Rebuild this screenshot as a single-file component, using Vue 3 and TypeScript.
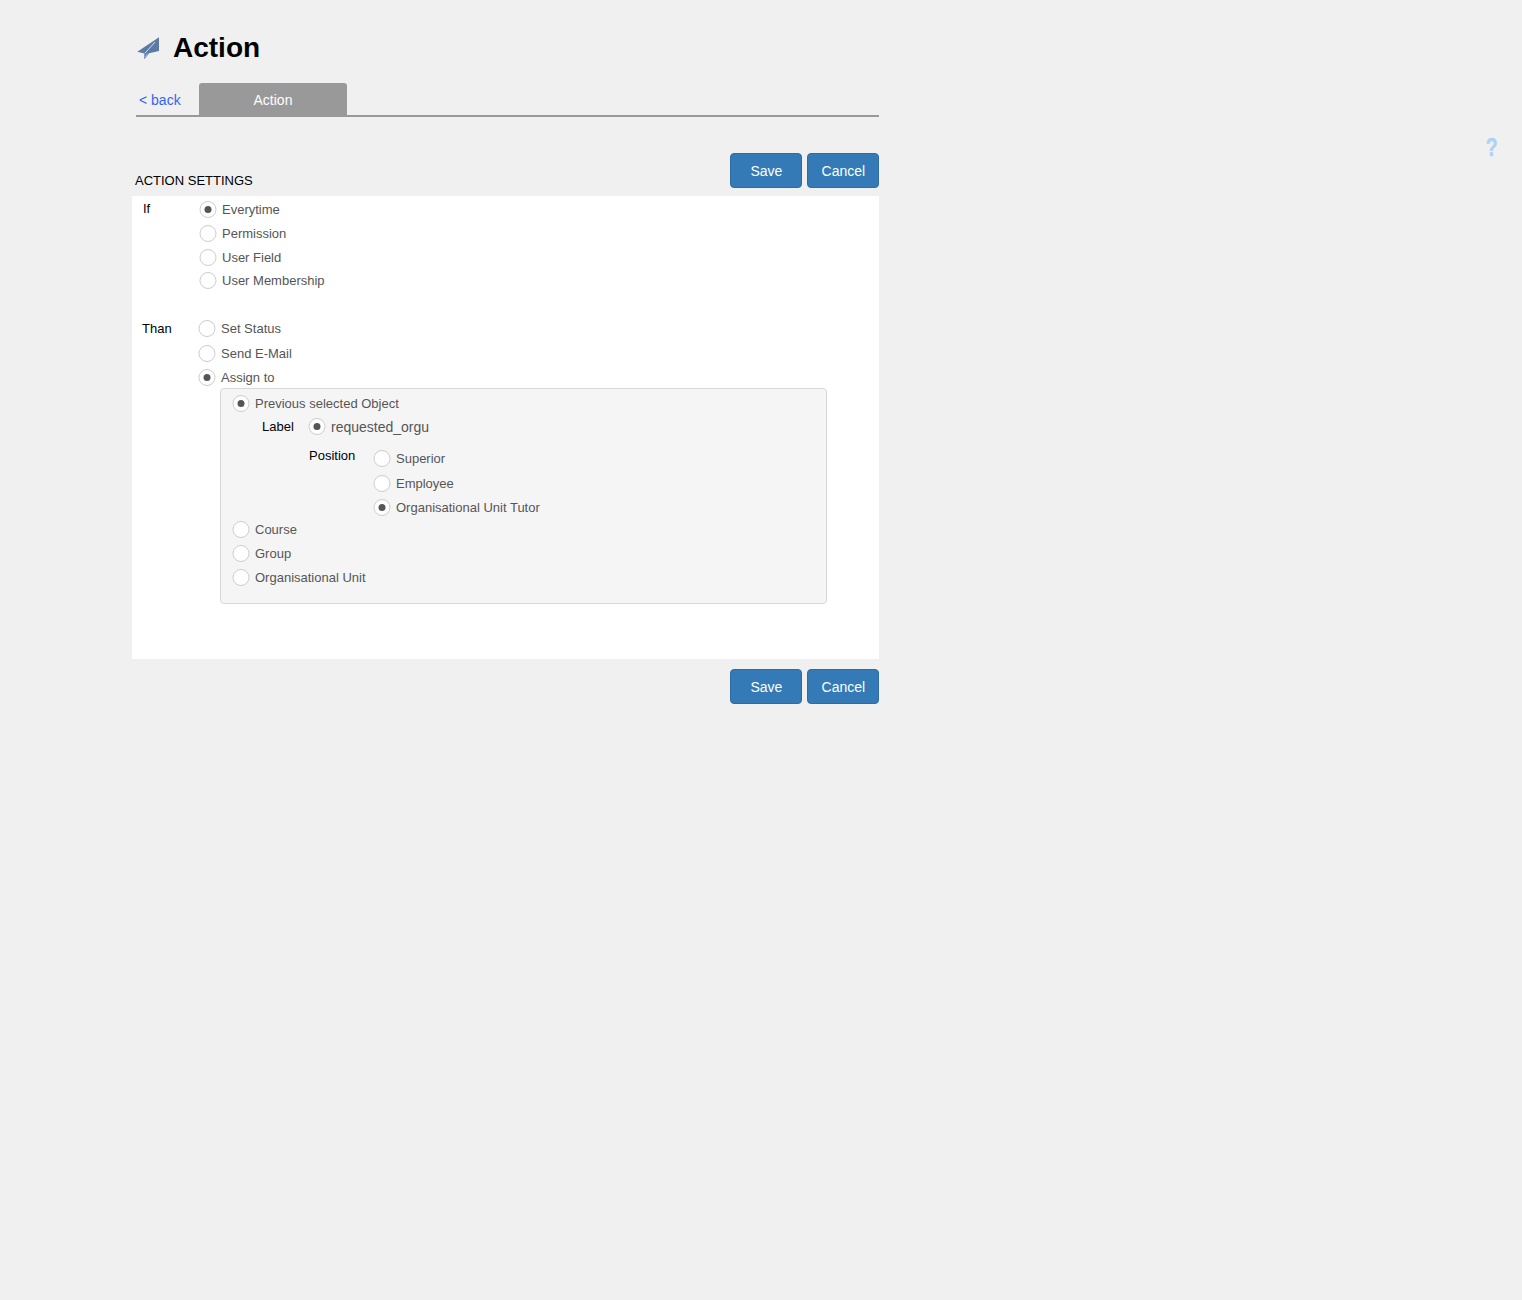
<script setup lang="ts">
interface Opt { label: string; on?: boolean; h: number }
const ifOpts: Opt[] = [
  { label: 'Everytime', on: true, h: 24 },
  { label: 'Permission', h: 24 },
  { label: 'User Field', h: 24 },
  { label: 'User Membership', h: 23 },
]
const thanOpts: Opt[] = [
  { label: 'Set Status', h: 25 },
  { label: 'Send E-Mail', h: 24 },
  { label: 'Assign to', on: true, h: 24 },
]
const posOpts: Opt[] = [
  { label: 'Superior', h: 25 },
  { label: 'Employee', h: 24.5 },
  { label: 'Organisational Unit Tutor', on: true, h: 24 },
]
const lowerOpts: Opt[] = [
  { label: 'Course', h: 24 },
  { label: 'Group', h: 24 },
  { label: 'Organisational Unit', h: 24 },
]
</script>

<template>
  <div class="page">
    <header class="title">
      <svg class="title-icon" width="24" height="24" viewBox="0 0 24 24" aria-hidden="true">
        <path d="M23 1.3 L1.3 15.7 L8.3 17.5 L8.3 23.3 L11.7 19.3 L13 17.2 L23 15 Z" fill="#5b7ba6" />
        <path d="M8.8 17.4 L19 6" stroke="#dfe5ee" stroke-width="0.9" fill="none" />
        <path d="M9.3 21 L11.4 17.6" stroke="#c4d0e0" stroke-width="0.8" fill="none" />
      </svg>
      <h1>Action</h1>
    </header>

    <nav class="tabs">
      <a class="back">&lt; back</a>
      <span class="tab">Action</span>
    </nav>

    <div class="head-row">
      <h2>ACTION SETTINGS</h2>
      <div class="btns">
        <button>Save</button>
        <button>Cancel</button>
      </div>
    </div>

    <section class="panel">
      <div class="group group-if">
        <div class="grp-label">If</div>
        <div class="col">
          <div v-for="o in ifOpts" :key="o.label" class="opt" :style="{ height: o.h + 'px' }">
            <span class="radio" :class="{ on: o.on }"></span>{{ o.label }}
          </div>
        </div>
      </div>

      <div class="group group-than">
        <div class="grp-label">Than</div>
        <div class="col">
          <div v-for="o in thanOpts" :key="o.label" class="opt" :style="{ height: o.h + 'px' }">
            <span class="radio" :class="{ on: o.on }"></span>{{ o.label }}
          </div>
          <div class="box">
            <div class="opt opt-tall"><span class="radio on"></span>Previous selected Object</div>
            <div class="label-row">
              <span class="mini-label">Label</span>
              <span class="radio on"></span>
              <span class="big-text">requested_orgu</span>
            </div>
            <div class="pos-row">
              <span class="mini-label pos-label">Position</span>
              <div class="pos-col">
                <div v-for="o in posOpts" :key="o.label" class="opt" :style="{ height: o.h + 'px' }">
                  <span class="radio" :class="{ on: o.on }"></span>{{ o.label }}
                </div>
              </div>
            </div>
            <div v-for="o in lowerOpts" :key="o.label" class="opt" :style="{ height: o.h + 'px' }">
              <span class="radio"></span>{{ o.label }}
            </div>
          </div>
        </div>
      </div>
    </section>

    <div class="foot-row btns">
      <button>Save</button>
      <button>Cancel</button>
    </div>

    <span class="help">?</span>
  </div>
</template>

<style>
html, body { margin: 0; background: #f0f0f0; }
</style>

<style scoped>
.page {
  width: 747px;
  height: 1300px;
  margin-left: 132px;
  font-family: "Liberation Sans", Arial, sans-serif;
  color: #000;
  box-sizing: border-box;
}
.title {
  display: flex;
  align-items: center;
  height: 83px;
  padding: 13px 0 0 4px;
  box-sizing: border-box;
  gap: 13px;
}
.title-icon { display: block; }
h1 { margin: 0; font-size: 28px; font-weight: 700; line-height: 32px; }
.tabs {
  display: flex;
  margin-left: 4px;
  width: 742.5px;
  height: 34px;
  box-sizing: border-box;
  border-bottom: 2px solid #999;
}
.back {
  width: 63px;
  padding-left: 3px;
  box-sizing: border-box;
  font-size: 14px;
  line-height: 34px;
  color: #3366ee;
}
.tab {
  width: 148px;
  height: 33px;
  background: #999;
  color: #fff;
  font-size: 14px;
  line-height: 34px;
  text-align: center;
  border-radius: 3px 3px 0 0;
}
.head-row {
  display: flex;
  justify-content: space-between;
  align-items: flex-end;
  height: 79px;
  padding-left: 3px;
  padding-top: 35px;
  box-sizing: border-box;
}
h2 {
  margin: 0 0 7px;
  font-size: 13px;
  font-weight: 400;
  line-height: 16px;
  color: #000;
}
.btns { display: flex; gap: 5px; justify-content: flex-end; margin-right: -0.4px; }
.head-row .btns { margin-bottom: 7.6px; }
button {
  width: 72px;
  height: 35px;
  padding: 0;
  font-family: inherit;
  font-size: 14px;
  color: #fff;
  background: #337ab7;
  border: 1px solid #2e6da4;
  border-radius: 4px;
}
.panel {
  background: #fff;
  height: 463px;
  box-sizing: border-box;
  padding-top: 1px;
}
.group { display: flex; }
.grp-label { font-size: 13px; line-height: 24px; }
.group-if { padding-left: 11px; height: 119px; }
.group-if .grp-label { width: 57px; }
.group-than { padding-left: 10px; }
.group-than .grp-label { width: 57px; margin-top: 1px; }
.col { display: flex; flex-direction: column; }
.opt {
  display: flex;
  align-items: center;
  font-size: 13px;
  color: #555;
  white-space: nowrap;
}
.radio {
  flex: none;
  width: 17px;
  height: 17px;
  margin-right: 5px;
  box-sizing: border-box;
  border: 1px solid #ccc;
  border-radius: 50%;
  background: #fff;
  display: flex;
  align-items: center;
  justify-content: center;
  transform: translateX(-0.5px);
}
.radio.on::after {
  content: "";
  width: 7px;
  height: 7px;
  border-radius: 50%;
  background: #555;
}
.box {
  margin-left: 21px;
  margin-top: -1px;
  width: 607px;
  height: 216px;
  padding: 1.5px 12px 0;
  box-sizing: border-box;
  background: #f5f5f5;
  border: 1.5px solid #d8d8d8;
  border-radius: 4px;
}
.opt-tall { height: 25px; }
.label-row {
  display: flex;
  align-items: center;
  height: 22px;
  padding-left: 29px;
}
.mini-label { font-size: 13px; color: #000; }
.label-row .mini-label { width: 47px; }
.big-text { font-size: 14px; color: #555; }
.pos-row {
  display: flex;
  padding-left: 76px;
  height: 80px;
  padding-top: 8.5px;
  box-sizing: border-box;
}
.pos-label { width: 65px; line-height: 16px; padding-top: 1.5px; }
.foot-row { margin-top: 10.4px; }
.help {
  position: absolute;
  left: 1483.5px;
  top: 133px;
  font-size: 25px;
  line-height: 28px;
  font-weight: 700;
  color: #aed1f7;
  -webkit-text-stroke: 0.4px #aed1f7;
  transform: scaleX(0.78);
}
</style>
